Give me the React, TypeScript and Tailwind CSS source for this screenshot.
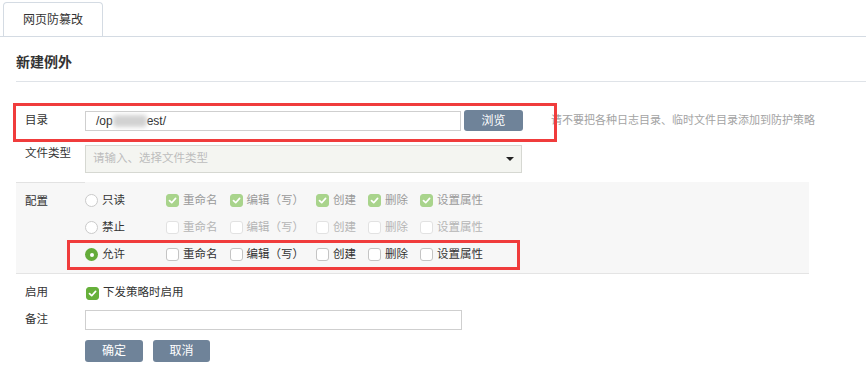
import React from "react"

const font = { fontFamily: '"Liberation Sans", "Noto Sans CJK SC", sans-serif' }

const perms = ["重命名", "编辑（写）", "创建", "删除", "设置属性"]

function Check({ state }: { state: "on" | "off" | "dim-on" | "dim-off" }) {
    const on = state === "on" || state === "dim-on"
    const bg =
        state === "on"
            ? "bg-[#66b03a] border-[#66b03a]"
            : state === "dim-on"
            ? "bg-[#a9d48c] border-[#a9d48c]"
            : state === "dim-off"
            ? "bg-white border-[#e2e2e2]"
            : "bg-white border-[#c4c4c4]"
    return (
        <span
            className={`w-[13px] h-[13px] rounded-[3px] border flex items-center justify-center shrink-0 ${bg}`}
        >
            {on && (
                <svg width="9" height="9" viewBox="0 0 9 9">
                    <polyline
                        points="1.5,4.6 3.7,6.7 7.6,2.4"
                        fill="none"
                        stroke="white"
                        strokeWidth="1.7"
                        strokeLinecap="round"
                        strokeLinejoin="round"
                    />
                </svg>
            )}
        </span>
    )
}

function Radio({ checked, label }: { checked?: boolean; label: string }) {
    return (
        <div className="w-[81px] flex items-center gap-[4px] shrink-0">
            {checked ? (
                <span className="w-[13px] h-[13px] rounded-full bg-[#64ab3a] flex items-center justify-center">
                    <span className="w-[4px] h-[4px] rounded-full bg-white" />
                </span>
            ) : (
                <span className="w-[13px] h-[13px] rounded-full border border-[#cacaca] bg-white" />
            )}
            <span className="text-[#333]">{label}</span>
        </div>
    )
}

function PermRow({
    radio,
    checked,
    state,
    textColor,
    marked,
}: {
    radio: string
    checked?: boolean
    state: "on" | "off" | "dim-on" | "dim-off"
    textColor: string
    marked?: boolean
}) {
    return (
        <div className="relative h-[27px] flex items-center">
            <Radio checked={checked} label={radio} />
            {perms.map((p) => (
                <div key={p} className="flex items-center gap-[4px] mr-[12px]">
                    <Check state={state} />
                    <span className={textColor}>{p}</span>
                </div>
            ))}
            {marked && (
                <div className="absolute left-[-18px] top-[-1px] w-[453px] h-[30px] border-[3px] border-[#f03c3c] pointer-events-none" />
            )}
        </div>
    )
}

export default function App() {
    return (
        <div
            className="w-[866px] h-[373px] bg-white overflow-hidden text-[11.5px] text-[#333]"
            style={font}
        >
            <div className="h-[37px] border-b border-[#d4dbe3] flex items-end pl-[3px]">
                <div className="w-[100px] h-[34px] border border-b-0 border-[#d4dbe3] rounded-t-[4px] flex items-center justify-center text-[12px] text-[#333]">
                    网页防篡改
                </div>
            </div>

            <div className="ml-[16px] pt-[15px] pb-[9px] border-b border-[#dfe3e8]">
                <h1 className="text-[14px] font-bold leading-[20px] text-[#333]">新建例外</h1>
            </div>

            <div className="pl-[16px]">
                <div className="relative mt-[28px] h-[21px] flex items-center">
                    <div className="w-[69px] pl-[9px]">目录</div>
                    <div className="w-[376px] h-[20px] border border-[#cfcfcf] flex items-center pl-[10px] text-[12px] text-[#333]">
                        <span>/op</span>
                        <span className="w-[34px] h-[12px] bg-[#d2d2d2] rounded-[4px] blur-[2px]" />
                        <span>est/</span>
                    </div>
                    <button className="ml-[3px] w-[59px] h-[21px] rounded-[3px] bg-[#6f8399] text-white text-[12px]">
                        浏览
                    </button>
                    <span className="ml-[28px] text-[11px] text-[#a3a3a3] whitespace-nowrap">
                        请不要把各种日志目录、临时文件目录添加到防护策略
                    </span>
                    <div className="absolute left-[-3px] top-[-7px] w-[544px] h-[39px] border-[3px] border-[#f03c3c] pointer-events-none" />
                </div>

                <div className="mt-[14px] flex items-start">
                    <div className="w-[69px] pl-[9px] pt-[1px] leading-[14px]">文件类型</div>
                    <div className="w-[437px] h-[28px] border border-[#d6d8d2] bg-[#f4f5f1] flex items-center justify-between pl-[7px] pr-[7px]">
                        <span className="text-[#bdbdbd]">请输入、选择文件类型</span>
                        <span className="w-0 h-0 border-l-[4px] border-r-[4px] border-t-[4px] border-l-transparent border-r-transparent border-t-[#222]" />
                    </div>
                </div>

                <div className="mt-[9px] w-[793px] bg-[#f7f7f7] border-b border-[#e4e4e4] flex">
                    <div className="w-[69px] border-t border-[#e2e2e2] pl-[9px] pt-[10px]">配置</div>
                    <div className="pt-[5px] pb-[5px]">
                        <PermRow radio="只读" state="dim-on" textColor="text-[#9a9a9a]" />
                        <PermRow radio="禁止" state="dim-off" textColor="text-[#b5b5b5]" />
                        <PermRow radio="允许" checked state="off" textColor="text-[#333]" marked />
                    </div>
                </div>

                <div className="mt-[10px] h-[18px] flex items-center">
                    <div className="w-[69px] pl-[9px]">启用</div>
                    <div className="flex items-center gap-[4px] ml-[1px]">
                        <Check state="on" />
                        <span>下发策略时启用</span>
                    </div>
                </div>

                <div className="mt-[8px] h-[20px] flex items-center">
                    <div className="w-[69px] pl-[9px]">备注</div>
                    <div className="w-[377px] h-[20px] border border-[#cfcfcf] bg-white" />
                </div>

                <div className="mt-[10px] pl-[69px] flex gap-[10px]">
                    <button className="w-[58px] h-[22px] rounded-[3px] bg-[#6f8399] text-white text-[12px]">
                        确定
                    </button>
                    <button className="w-[57px] h-[22px] rounded-[3px] bg-[#6f8399] text-white text-[12px]">
                        取消
                    </button>
                </div>
            </div>
        </div>
    )
}
